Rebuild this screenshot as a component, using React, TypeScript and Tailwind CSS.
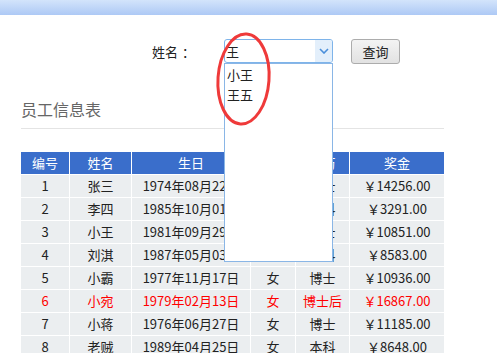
import React from "react";

const rows = [
  ["1", "张三", "1974年08月22日", "男", "硕士", "￥14256.00", false],
  ["2", "李四", "1985年10月01日", "男", "本科", "￥3291.00", false],
  ["3", "小王", "1981年09月29日", "男", "硕士", "￥10851.00", false],
  ["4", "刘淇", "1987年05月03日", "女", "本科", "￥8583.00", false],
  ["5", "小霸", "1977年11月17日", "女", "博士", "￥10936.00", false],
  ["6", "小宛", "1979年02月13日", "女", "博士后", "￥16867.00", true],
  ["7", "小蒋", "1976年06月27日", "女", "博士", "￥11185.00", false],
  ["8", "老贼", "1989年04月25日", "女", "本科", "￥8648.00", false],
] as const;

export default function App() {
  return (
    <div
      className="relative h-[353px] w-[497px] overflow-hidden bg-white text-[13px] text-[#222]"
      style={{ fontFamily: '"Noto Sans CJK SC", "Noto Sans", sans-serif' }}
    >
      <div className="h-[15px] bg-gradient-to-b from-[#d3e4fb] to-[#adc9f5]" />

      <div className="mt-[24px] flex h-[24px] items-center">
        <span className="ml-[152px] w-[72px] leading-none">
          姓名<span className="ml-[4px]">：</span>
        </span>
        <div className="relative">
          <div className="flex h-[24px] w-[109px] items-center justify-between rounded-[3px] border border-[#7eb4ea] bg-white pl-[1px]">
            <span className="leading-none">王</span>
            <div className="flex h-[22px] w-[17px] items-center justify-center rounded-r-[2px] bg-[#e3effb]">
              <svg width="10" height="6" viewBox="0 0 10 6">
                <path d="M1 1 L5 5 L9 1" fill="none" stroke="#4a8fdb" strokeWidth="1.6" />
              </svg>
            </div>
          </div>
          <div className="absolute left-0 top-full z-10 flex h-[199px] w-[109px] flex-col border border-[#8ab6e6] bg-white pl-[2px] pt-[1px]">
            <div className="h-[20px] leading-[20px]">小王</div>
            <div className="h-[20px] leading-[20px]">王五</div>
          </div>
        </div>
        <button className="ml-[18px] h-[25px] w-[49px] rounded-[3px] border border-[#acacac] bg-gradient-to-b from-[#f3f3f3] to-[#e2e2e2] text-[13px] leading-none text-[#222]">
          查询
        </button>
      </div>

      <div className="mx-[21px] mt-[35px] w-[423px]">
        <div className="text-[16px] leading-[22px] text-[#666]">员工信息表</div>
        <div className="mt-[8px] h-px bg-[#e4e4e4]" />
        <div className="mt-[23px] grid grid-cols-[48px_61px_118px_44px_53px_94px] gap-px bg-white">
          {["编号", "姓名", "生日", "性别", "学历", "奖金"].map((h) => (
            <div key={h} className="flex h-[22px] items-center justify-center bg-[#3a6ecb] text-white">
              {h}
            </div>
          ))}
          {rows.map((r) =>
            r.slice(0, 6).map((c, i) => (
              <div
                key={r[0] + "-" + i}
                className={
                  "flex h-[22px] items-center justify-center bg-[#ebeef0] " +
                  (r[6] ? "text-[#ff0000]" : "text-[#222]")
                }
              >
                {c as string}
              </div>
            ))
          )}
        </div>
      </div>

      <svg className="pointer-events-none absolute left-[210px] top-[28px] z-20" width="70" height="104" viewBox="0 0 70 104">
        <ellipse cx="33.5" cy="51" rx="25.5" ry="45" fill="none" stroke="#ef3a3a" strokeWidth="3" transform="rotate(4 33.5 51)" />
      </svg>
    </div>
  );
}
